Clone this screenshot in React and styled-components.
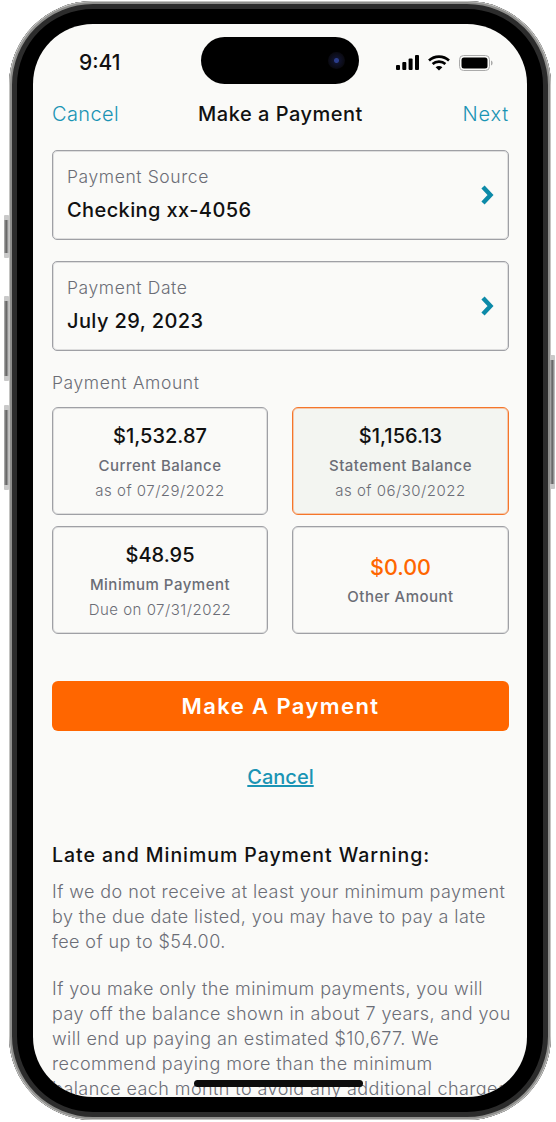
import React from "react";
import styled, { createGlobalStyle } from "styled-components";

const GlobalStyle = createGlobalStyle`
  html, body {
    margin: 0;
    padding: 0;
    background: #fff;
    font-family: Inter, "Liberation Sans", sans-serif;
  }
  * { box-sizing: border-box; }
`;

const Page = styled.div`
  width: 556px;
  height: 1122px;
  padding: 1px 0 0 9px;
  overflow: hidden;
`;

const Device = styled.div`
  position: relative;
  width: 542px;
  height: 1119px;
  padding: 23px 24px;
  border-radius: 84px;
  background: #000;
  box-shadow: inset 0 0 0 1px #c4c4c2, inset 0 0 0 3px #8f8f8d, inset 0 0 0 8px #2c2c2c;
`;

const SideButton = styled.span`
  position: absolute;
  top: ${props => props.top}px;
  ${props => (props.right ? "right: -4px;" : "left: -5px;")}
  width: 5px;
  height: ${props => props.h}px;
  background:
    linear-gradient(180deg, #c9c9c9 0 5px, transparent 5px calc(100% - 5px), #c9c9c9 calc(100% - 5px)),
    linear-gradient(90deg, #b8b8b8, #5e5e5e 45%, #cfcfcf);
  border-radius: 1px;
`;

const Screen = styled.div`
  position: relative;
  width: 494px;
  height: 1073px;
  overflow: hidden;
  border-radius: 60px;
  background: #fafaf8;
`;

const Island = styled.div`
  position: absolute;
  top: 13px;
  left: 168px;
  width: 158px;
  height: 47px;
  border-radius: 24px;
  background: #000;
`;

const Camera = styled.span`
  position: absolute;
  top: 15px;
  right: 14px;
  width: 17px;
  height: 17px;
  border-radius: 50%;
  background: radial-gradient(circle, #2a3c8a 0 2px, #10132c 3px, #0a0a12 8px);
`;

const HomeBar = styled.div`
  position: absolute;
  left: 161px;
  bottom: 10px;
  width: 169px;
  height: 7px;
  border-radius: 4px;
  background: #0c0c0c;
`;

const StatusBar = styled.div`
  display: flex;
  justify-content: space-between;
  align-items: center;
  height: 33px;
  margin-top: 22px;
  padding: 0 34px 0 46px;
`;

const Time = styled.span`
  font-size: 21px;
  font-weight: 500;
  color: #111;
`;

const StatusIcons = styled.div`
  display: flex;
  align-items: center;
  gap: 9px;
`;

const Content = styled.div`
  padding: 0 18px 0 19px;
`;

const Nav = styled.div`
  display: grid;
  grid-template-columns: 1fr auto 1fr;
  align-items: center;
  height: 28px;
  margin-top: 21px;
`;

const NavLink = styled.span`
  font-size: 20px;
  font-weight: 300;
  letter-spacing: ${props => (props.end ? 0.8 : 0.4)}px;
  color: #1a94b4;
  text-align: ${props => (props.end ? "right" : "left")};
`;

const NavTitle = styled.span`
  font-size: 20px;
  font-weight: 500;
  letter-spacing: 0.5px;
  color: #111;
`;

const SelectCard = styled.div`
  display: flex;
  justify-content: space-between;
  align-items: center;
  height: 90px;
  margin-top: ${props => (props.first ? 22 : 21)}px;
  padding: 0 13px 3px 14px;
  border: 1px solid #9fa0a5;
  box-shadow: inset 0 0 0 1px rgba(170, 170, 175, 0.35);
  border-radius: 5px;
`;

const FieldLabel = styled.div`
  font-size: 17.5px;
  font-weight: 300;
  letter-spacing: 0.6px;
  color: #6b6d76;
  line-height: 26px;
`;

const FieldValue = styled.div`
  margin-top: 7px;
  font-size: 20px;
  font-weight: 500;
  letter-spacing: 0.4px;
  color: #111;
  line-height: 26px;
`;

const ChevronWrap = styled.span`
  display: flex;
  margin-top: 3px;
`;

const SectionLabel = styled.div`
  margin-top: 19px;
  font-size: 17.5px;
  font-weight: 300;
  letter-spacing: 0.6px;
  color: #6b6d76;
  line-height: 26px;
`;

const AmountGrid = styled.div`
  display: grid;
  grid-template-columns: 216px 217px;
  grid-auto-rows: 108px;
  column-gap: 24px;
  row-gap: 11px;
  margin-top: 11px;
`;

const AmountCard = styled.div`
  display: flex;
  flex-direction: column;
  align-items: center;
  justify-content: center;
  padding-top: 2px;
  border: 1px solid ${props => (props.selected ? "#f5762a" : "#9fa0a5")};
  box-shadow: inset 0 0 0 1px ${props => (props.selected ? "rgba(245, 118, 42, 0.35)" : "rgba(170, 170, 175, 0.35)")};
  border-radius: 6px;
  background: ${props => (props.selected ? "#f3f5f1" : "transparent")};
`;

const Amount = styled.div`
  font-size: ${props => (props.accent ? 21.5 : 20)}px;
  font-weight: 500;
  line-height: 26px;
  color: ${props => (props.accent ? "#ff6600" : "#111")};
`;

const AmountName = styled.div`
  margin-top: 6px;
  font-size: 15px;
  font-weight: 500;
  letter-spacing: 0.5px;
  line-height: 22px;
  color: #6b6d76;
`;

const AmountNote = styled.div`
  margin-top: 3px;
  font-size: 15px;
  font-weight: 300;
  letter-spacing: 0.5px;
  line-height: 22px;
  color: #6b6d76;
`;

const PayButton = styled.button`
  display: block;
  width: 100%;
  height: 50px;
  margin-top: 47px;
  border: 0;
  border-radius: 6px;
  background: #ff6600;
  color: #fff;
  font-family: inherit;
  font-size: 22px;
  font-weight: 600;
  letter-spacing: 1.4px;
`;

const CancelLink = styled.a`
  display: block;
  margin-top: 32px;
  text-align: center;
  font-size: 20px;
  font-weight: 500;
  line-height: 28px;
  color: #1a94b4;
  text-decoration: underline;
`;

const WarningTitle = styled.h2`
  margin: 50px 0 0;
  font-size: 19.5px;
  font-weight: 500;
  letter-spacing: 0.95px;
  line-height: 28px;
  color: #111;
`;

const Body = styled.p`
  margin: ${props => (props.first ? 10 : 21)}px 0 0;
  white-space: nowrap;
  font-size: 18px;
  font-weight: 300;
  letter-spacing: 0.42px;
  line-height: 25.2px;
  color: #6b6d76;
`;

const Chevron = () => (
  <svg width="15" height="20" viewBox="0 0 15 20">
    <path d="M3 2 L10.5 10 L3 18" fill="none" stroke="#0c8aa8" strokeWidth="4.4" strokeLinejoin="miter" />
  </svg>
);

const Signal = () => (
  <svg width="23" height="15" viewBox="0 0 23 15" fill="#000">
    <rect x="0" y="10" width="4" height="5" rx="1" />
    <rect x="6.3" y="7" width="4" height="8" rx="1" />
    <rect x="12.6" y="3.5" width="4" height="11.5" rx="1" />
    <rect x="19" y="0" width="4" height="15" rx="1" />
  </svg>
);

const Wifi = () => (
  <svg width="22" height="16" viewBox="0 0 22 16" fill="none" stroke="#000" strokeWidth="2.6">
    <path d="M1 5.5 C6.5 0.3 15.5 0.3 21 5.5" />
    <path d="M4.6 9 C8 5.8 14 5.8 17.4 9" />
    <path d="M11 15.5 L7.6 12.2 C9.5 10.6 12.5 10.6 14.4 12.2 Z" fill="#000" stroke="none" />
  </svg>
);

const Battery = () => (
  <svg width="34" height="16" viewBox="0 0 34 16">
    <rect x="0.5" y="0.5" width="30" height="15" rx="4" fill="none" stroke="#aaa" />
    <rect x="2.5" y="2.5" width="26" height="11" rx="2.5" fill="#000" />
    <path d="M32 5.5 C33.2 6 33.6 7 33.6 8 C33.6 9 33.2 10 32 10.5 Z" fill="#aaa" />
  </svg>
);

const amounts = [
  { value: "$1,532.87", name: "Current Balance", note: "as of 07/29/2022" },
  { value: "$1,156.13", name: "Statement Balance", note: "as of 06/30/2022", selected: true },
  { value: "$48.95", name: "Minimum Payment", note: "Due on 07/31/2022" },
  { value: "$0.00", name: "Other Amount", accent: true },
];

export default function App() {
  return (
    <Page>
      <GlobalStyle />
      <Device>
        <SideButton top={214} h={43} />
        <SideButton top={295} h={85} />
        <SideButton top={404} h={85} />
        <SideButton right top={354} h={134} />
        <Screen>
          <StatusBar>
            <Time>9:41</Time>
            <StatusIcons>
              <Signal />
              <Wifi />
              <Battery />
            </StatusIcons>
          </StatusBar>
          <Content>
            <Nav>
              <NavLink>Cancel</NavLink>
              <NavTitle>Make a Payment</NavTitle>
              <NavLink end>Next</NavLink>
            </Nav>
            <SelectCard first>
              <div>
                <FieldLabel>Payment Source</FieldLabel>
                <FieldValue>Checking xx-4056</FieldValue>
              </div>
              <ChevronWrap><Chevron /></ChevronWrap>
            </SelectCard>
            <SelectCard>
              <div>
                <FieldLabel>Payment Date</FieldLabel>
                <FieldValue>July 29, 2023</FieldValue>
              </div>
              <ChevronWrap><Chevron /></ChevronWrap>
            </SelectCard>
            <SectionLabel>Payment Amount</SectionLabel>
            <AmountGrid>
              {amounts.map(a => (
                <AmountCard key={a.name} selected={a.selected}>
                  <Amount accent={a.accent}>{a.value}</Amount>
                  <AmountName>{a.name}</AmountName>
                  {a.note && <AmountNote>{a.note}</AmountNote>}
                </AmountCard>
              ))}
            </AmountGrid>
            <PayButton>Make A Payment</PayButton>
            <CancelLink>Cancel</CancelLink>
            <WarningTitle>Late and Minimum Payment Warning:</WarningTitle>
            <Body first>
              If we do not receive at least your minimum payment<br />
              by the due date listed, you may have to pay a late<br />
              fee of up to $54.00.
            </Body>
            <Body>
              If you make only the minimum payments, you will<br />
              pay off the balance shown in about 7 years, and you<br />
              will end up paying an estimated $10,677. We<br />
              recommend paying more than the minimum<br />
              balance each month to avoid any additional charges.
            </Body>
          </Content>
          <Island>
            <Camera />
          </Island>
          <HomeBar />
        </Screen>
      </Device>
    </Page>
  );
}
